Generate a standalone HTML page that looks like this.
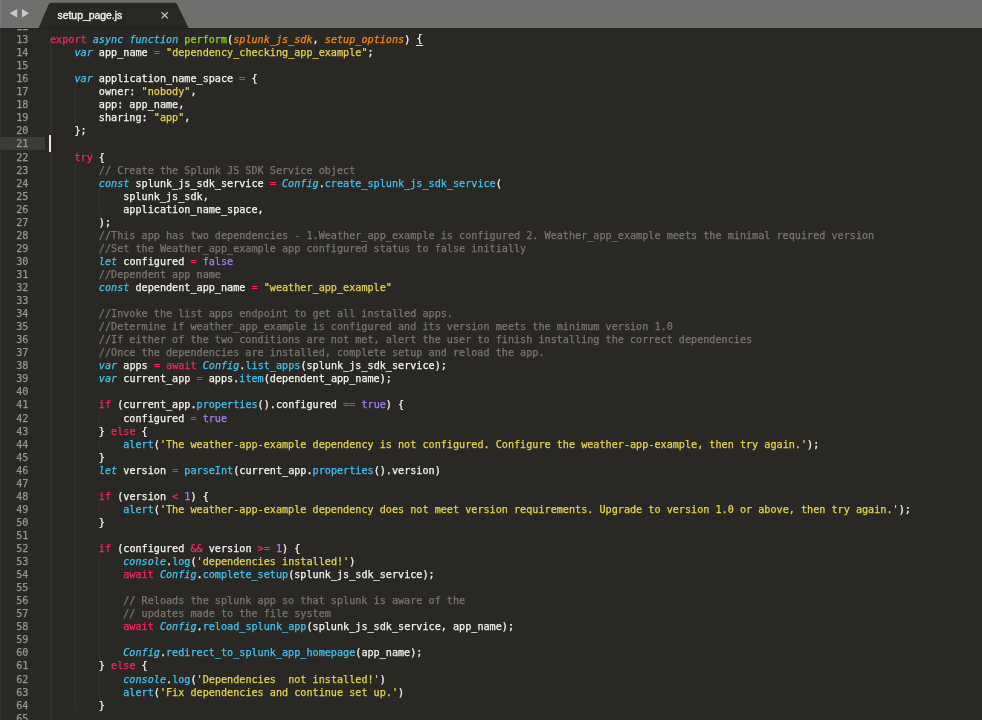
<!DOCTYPE html>
<html lang="en">
<head>
<meta charset="utf-8">
<title>setup_page.js</title>
<style>
html,body{margin:0;padding:0;}
body{width:982px;height:720px;overflow:hidden;background:#292824;position:relative;font-family:"DejaVu Sans Mono","Liberation Mono",monospace;}
#ed{filter:blur(0.35px);position:absolute;left:0;top:0;width:982px;height:720px;overflow:hidden;background:#292824;}
#edge{position:absolute;left:0;top:0;width:1px;height:720px;background:#33322e;}
.ln{-webkit-text-stroke:0.25px;position:absolute;left:0;width:982px;height:13.05px;line-height:13.05px;font-size:10.157px;color:#f4f3ec;white-space:pre;}
.ln.cur:before{content:"";position:absolute;left:0;top:0.4px;width:45.3px;height:13.4px;background:#3c3b35;}
.no{position:absolute;left:0;top:0.90px;width:28.4px;text-align:right;color:#96968f;}
.cd{position:absolute;left:50.00px;top:0.90px;letter-spacing:0.0000px;}
.no{letter-spacing:0.0000px;}
.k{color:#f8265f;}
.s{color:#43c2f2;font-style:italic;}
.f{color:#43c2f2;}
.g{color:#90d820;}
.p{color:#f98a12;font-style:italic;}
.y{color:#e6d24e;}
.c{color:#79776c;}
.n{color:#a97bfb;}
.u{box-shadow:0 1px 0 #e8e6de;display:inline-block;height:12.3px;line-height:12.3px;vertical-align:top;}
.gd{position:absolute;width:1px;background:#34332f;}
#shade{position:absolute;left:0;top:28px;width:982px;height:1px;background:#20201d;}
#caret{position:absolute;left:49px;top:135px;width:2px;height:16.7px;background:#e6e4dc;}
#tabbar{position:absolute;left:0;top:0;width:982px;height:28px;}
#title{-webkit-text-stroke:0.35px;filter:blur(0.3px);position:absolute;left:57.5px;top:8.5px;font-family:"Liberation Sans",sans-serif;font-size:10.4px;line-height:13px;color:#f4f4f2;white-space:pre;}
</style>
</head>
<body>
<div id="ed">
<div id="edge"></div>
<i class="gd" style="left:50.30px;top:45.25px;height:691.65px"></i>
<i class="gd" style="left:74.76px;top:84.40px;height:39.15px"></i>
<i class="gd" style="left:74.76px;top:162.70px;height:548.10px"></i>
<i class="gd" style="left:99.22px;top:188.80px;height:26.10px"></i>
<i class="gd" style="left:99.22px;top:410.65px;height:13.05px"></i>
<i class="gd" style="left:99.22px;top:436.75px;height:13.05px"></i>
<i class="gd" style="left:99.22px;top:502.00px;height:13.05px"></i>
<i class="gd" style="left:99.22px;top:554.20px;height:104.40px"></i>
<i class="gd" style="left:99.22px;top:671.65px;height:26.10px"></i>
<div class="ln" style="top:19.15px"><span class="no">12</span><span class="cd"></span></div>
<div class="ln" style="top:32.20px"><span class="no">13</span><span class="cd"><span class="k">export</span> <span class="s">async</span> <span class="s">function</span> <span class="g">perform</span>(<span class="p">splunk_js_sdk</span>, <span class="p">setup_options</span>) <span class="u">{</span></span></div>
<div class="ln" style="top:45.25px"><span class="no">14</span><span class="cd">    <span class="s">var</span> app_name <span class="k">=</span> <span class="y">"dependency_checking_app_example"</span>;</span></div>
<div class="ln" style="top:58.30px"><span class="no">15</span><span class="cd"></span></div>
<div class="ln" style="top:71.35px"><span class="no">16</span><span class="cd">    <span class="s">var</span> application_name_space <span class="k">=</span> {</span></div>
<div class="ln" style="top:84.40px"><span class="no">17</span><span class="cd">        owner: <span class="y">"nobody"</span>,</span></div>
<div class="ln" style="top:97.45px"><span class="no">18</span><span class="cd">        app: app_name,</span></div>
<div class="ln" style="top:110.50px"><span class="no">19</span><span class="cd">        sharing: <span class="y">"app"</span>,</span></div>
<div class="ln" style="top:123.55px"><span class="no">20</span><span class="cd">    };</span></div>
<div class="ln cur" style="top:136.60px"><span class="no">21</span><span class="cd"></span></div>
<div class="ln" style="top:149.65px"><span class="no">22</span><span class="cd">    <span class="k">try</span> {</span></div>
<div class="ln" style="top:162.70px"><span class="no">23</span><span class="cd">        <span class="c">// Create the Splunk JS SDK Service object</span></span></div>
<div class="ln" style="top:175.75px"><span class="no">24</span><span class="cd">        <span class="s">const</span> splunk_js_sdk_service <span class="k">=</span> <span class="s">Config</span>.<span class="f">create_splunk_js_sdk_service</span>(</span></div>
<div class="ln" style="top:188.80px"><span class="no">25</span><span class="cd">            splunk_js_sdk,</span></div>
<div class="ln" style="top:201.85px"><span class="no">26</span><span class="cd">            application_name_space,</span></div>
<div class="ln" style="top:214.90px"><span class="no">27</span><span class="cd">        );</span></div>
<div class="ln" style="top:227.95px"><span class="no">28</span><span class="cd">        <span class="c">//This app has two dependencies - 1.Weather_app_example is configured 2. Weather_app_example meets the minimal required version</span></span></div>
<div class="ln" style="top:241.00px"><span class="no">29</span><span class="cd">        <span class="c">//Set the Weather_app_example app configured status to false initially</span></span></div>
<div class="ln" style="top:254.05px"><span class="no">30</span><span class="cd">        <span class="s">let</span> configured <span class="k">=</span> <span class="n">false</span></span></div>
<div class="ln" style="top:267.10px"><span class="no">31</span><span class="cd">        <span class="c">//Dependent app name</span></span></div>
<div class="ln" style="top:280.15px"><span class="no">32</span><span class="cd">        <span class="s">const</span> dependent_app_name <span class="k">=</span> <span class="y">"weather_app_example"</span></span></div>
<div class="ln" style="top:293.20px"><span class="no">33</span><span class="cd"></span></div>
<div class="ln" style="top:306.25px"><span class="no">34</span><span class="cd">        <span class="c">//Invoke the list apps endpoint to get all installed apps.</span></span></div>
<div class="ln" style="top:319.30px"><span class="no">35</span><span class="cd">        <span class="c">//Determine if weather_app_example is configured and its version meets the minimum version 1.0</span></span></div>
<div class="ln" style="top:332.35px"><span class="no">36</span><span class="cd">        <span class="c">//If either of the two conditions are not met, alert the user to finish installing the correct dependencies</span></span></div>
<div class="ln" style="top:345.40px"><span class="no">37</span><span class="cd">        <span class="c">//Once the dependencies are installed, complete setup and reload the app.</span></span></div>
<div class="ln" style="top:358.45px"><span class="no">38</span><span class="cd">        <span class="s">var</span> apps <span class="k">=</span> <span class="k">await</span> <span class="s">Config</span>.<span class="f">list_apps</span>(splunk_js_sdk_service);</span></div>
<div class="ln" style="top:371.50px"><span class="no">39</span><span class="cd">        <span class="s">var</span> current_app <span class="k">=</span> apps.<span class="f">item</span>(dependent_app_name);</span></div>
<div class="ln" style="top:384.55px"><span class="no">40</span><span class="cd"></span></div>
<div class="ln" style="top:397.60px"><span class="no">41</span><span class="cd">        <span class="k">if</span> (current_app.<span class="f">properties</span>().configured <span class="k">==</span> <span class="n">true</span>) {</span></div>
<div class="ln" style="top:410.65px"><span class="no">42</span><span class="cd">            configured <span class="k">=</span> <span class="n">true</span></span></div>
<div class="ln" style="top:423.70px"><span class="no">43</span><span class="cd">        } <span class="k">else</span> {</span></div>
<div class="ln" style="top:436.75px"><span class="no">44</span><span class="cd">            <span class="f">alert</span>(<span class="y">'The weather-app-example dependency is not configured. Configure the weather-app-example, then try again.'</span>);</span></div>
<div class="ln" style="top:449.80px"><span class="no">45</span><span class="cd">        }</span></div>
<div class="ln" style="top:462.85px"><span class="no">46</span><span class="cd">        <span class="s">let</span> version <span class="k">=</span> <span class="f">parseInt</span>(current_app.<span class="f">properties</span>().version)</span></div>
<div class="ln" style="top:475.90px"><span class="no">47</span><span class="cd"></span></div>
<div class="ln" style="top:488.95px"><span class="no">48</span><span class="cd">        <span class="k">if</span> (version <span class="k">&lt;</span> <span class="n">1</span>) {</span></div>
<div class="ln" style="top:502.00px"><span class="no">49</span><span class="cd">            <span class="f">alert</span>(<span class="y">'The weather-app-example dependency does not meet version requirements. Upgrade to version 1.0 or above, then try again.'</span>);</span></div>
<div class="ln" style="top:515.05px"><span class="no">50</span><span class="cd">        }</span></div>
<div class="ln" style="top:528.10px"><span class="no">51</span><span class="cd"></span></div>
<div class="ln" style="top:541.15px"><span class="no">52</span><span class="cd">        <span class="k">if</span> (configured <span class="k">&amp;&amp;</span> version <span class="k">&gt;=</span> <span class="n">1</span>) {</span></div>
<div class="ln" style="top:554.20px"><span class="no">53</span><span class="cd">            <span class="s">console</span>.<span class="f">log</span>(<span class="y">'dependencies installed!'</span>)</span></div>
<div class="ln" style="top:567.25px"><span class="no">54</span><span class="cd">            <span class="k">await</span> <span class="s">Config</span>.<span class="f">complete_setup</span>(splunk_js_sdk_service);</span></div>
<div class="ln" style="top:580.30px"><span class="no">55</span><span class="cd"></span></div>
<div class="ln" style="top:593.35px"><span class="no">56</span><span class="cd">            <span class="c">// Reloads the splunk app so that splunk is aware of the</span></span></div>
<div class="ln" style="top:606.40px"><span class="no">57</span><span class="cd">            <span class="c">// updates made to the file system</span></span></div>
<div class="ln" style="top:619.45px"><span class="no">58</span><span class="cd">            <span class="k">await</span> <span class="s">Config</span>.<span class="f">reload_splunk_app</span>(splunk_js_sdk_service, app_name);</span></div>
<div class="ln" style="top:632.50px"><span class="no">59</span><span class="cd"></span></div>
<div class="ln" style="top:645.55px"><span class="no">60</span><span class="cd">            <span class="s">Config</span>.<span class="f">redirect_to_splunk_app_homepage</span>(app_name);</span></div>
<div class="ln" style="top:658.60px"><span class="no">61</span><span class="cd">        } <span class="k">else</span> {</span></div>
<div class="ln" style="top:671.65px"><span class="no">62</span><span class="cd">            <span class="s">console</span>.<span class="f">log</span>(<span class="y">'Dependencies  not installed!'</span>)</span></div>
<div class="ln" style="top:684.70px"><span class="no">63</span><span class="cd">            <span class="f">alert</span>(<span class="y">'Fix dependencies and continue set up.'</span>)</span></div>
<div class="ln" style="top:697.75px"><span class="no">64</span><span class="cd">        }</span></div>
<div class="ln" style="top:710.80px"><span class="no">65</span><span class="cd"></span></div>
<div class="ln" style="top:723.85px"><span class="no">66</span><span class="cd"></span></div>
<div id="caret"></div>
<div id="shade"></div>
</div>
<div id="tabbar">
<svg width="982" height="28" viewBox="0 0 982 28" style="position:absolute;left:0;top:0">
<rect x="0" y="0" width="982" height="28" fill="#706f6e"/>
<rect x="0" y="27" width="982" height="1" fill="#777674"/>
<rect x="0" y="0" width="1.5" height="28" fill="#7a797b"/>
<path d="M38.6 28 L48.6 4.6 Q49.6 2.7 52 2.7 L174 2.7 Q176.4 2.7 177.3 4.6 L188.6 28 Z" fill="#292824"/>
<path d="M9.6 13.2 L17.1 9 L17.1 17.4 Z" fill="#c9c8cb"/>
<path d="M29 13.2 L22 9 L22 17.4 Z" fill="#c9c8cb"/>
<path d="M161.6 12.2 L167.8 18.4 M167.8 12.2 L161.6 18.4" stroke="#c9c7c2" stroke-width="1.25" fill="none"/>
</svg>
<div id="title">setup_page.js</div>
</div>
</body>
</html>
